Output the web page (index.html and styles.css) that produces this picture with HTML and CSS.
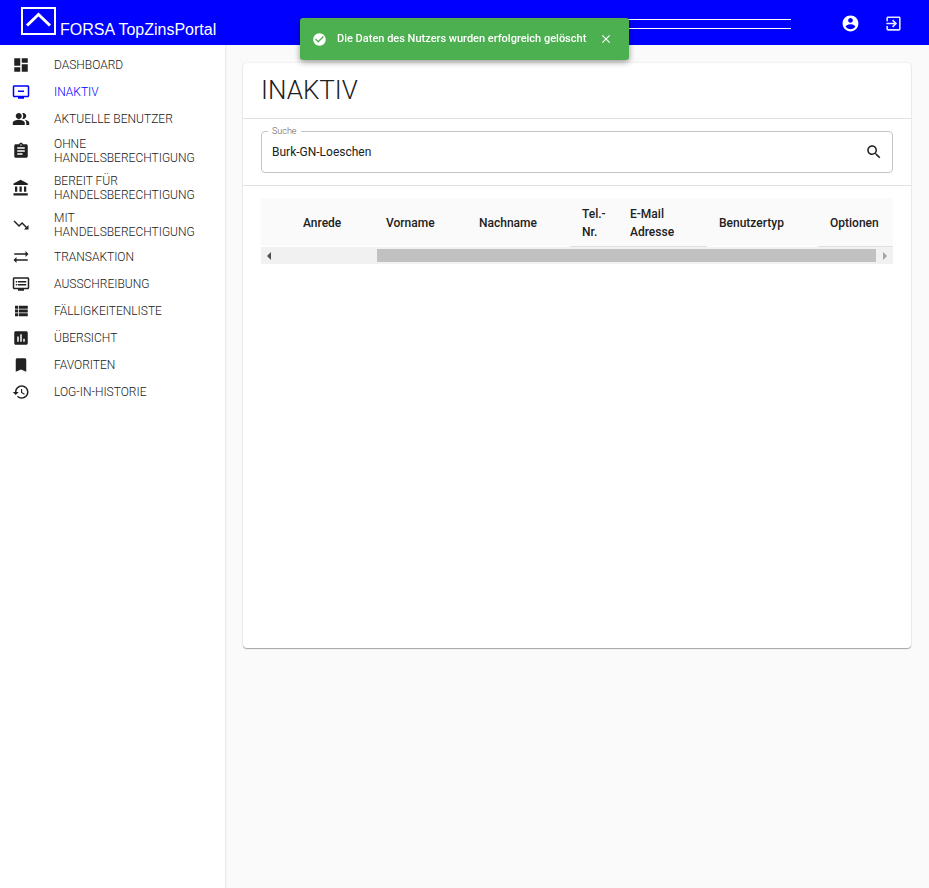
FILE: index.html
```html
<!DOCTYPE html>
<html lang="de">
<head>
<meta charset="utf-8">
<meta name="viewport" content="width=device-width, initial-scale=1">
<title>FORSA TopZinsPortal</title>
<link rel="stylesheet" href="styles.css">
</head>
<body>
<header class="topbar">
  <a class="brand" href="#">
    <svg class="brand-mark" viewBox="0 0 35 28" aria-hidden="true"><rect x="1" y="1" width="33" height="26"/><path d="M6 18.500 17.500 7.500 29 18.500"/></svg>
    <span>FORSA TopZinsPortal</span>
  </a>
  <div class="topbar-lines"></div>
  <div class="actions">
    <button type="button" aria-label="Konto"><svg class="icon" viewBox="0 0 24 24"><path d="M12 2C6.480 2 2 6.480 2 12s4.480 10 10 10 10-4.480 10-10S17.520 2 12 2zm0 3c1.660 0 3 1.340 3 3s-1.340 3-3 3-3-1.340-3-3 1.340-3 3-3zm0 14.200c-2.500 0-4.710-1.280-6-3.220.030-1.990 4-3.080 6-3.080 1.990 0 5.970 1.090 6 3.080-1.290 1.940-3.500 3.220-6 3.220z"/></svg></button>
    <button type="button" class="logout" aria-label="Abmelden"><svg class="icon" viewBox="0 0 24 24"><path d="M10.090 15.590L11.500 17l5-5-5-5-1.410 1.410L12.670 11H3v2h9.670l-2.580 2.590zM19 3H5c-1.110 0-2 .9-2 2v4h2V5h14v14H5v-4H3v4c0 1.100.890 2 2 2h14c1.100 0 2-.9 2-2V5c0-1.100-.9-2-2-2z"/></svg></button>
  </div>
</header>

<div class="layout">
  <nav class="sidebar">
    <a href="#"><svg class="icon" viewBox="0 0 24 24"><path d="M3 13h8V3H3v10zm0 8h8v-6H3v6zm10 0h8V11h-8v10zm0-18v6h8V3h-8z"/></svg><span>DASHBOARD</span></a>
    <a href="#" class="active" aria-current="page"><svg class="icon" viewBox="0 0 24 24"><path d="M21 3H3c-1.100 0-2 .9-2 2v12c0 1.100.9 2 2 2h5v2h8v-2h5c1.100 0 1.990-.9 1.990-2L23 5c0-1.100-.9-2-2-2zm0 14H3V5h18v12zm-5-7v2H8v-2h8z"/></svg><span>INAKTIV</span></a>
    <a href="#"><svg class="icon" viewBox="0 0 24 24"><path d="M16.670 13.130C18.040 14.060 19 15.320 19 17v3h4v-3c0-2.180-3.570-3.470-6.330-3.870zM15 12c2.210 0 4-1.790 4-4s-1.790-4-4-4c-.47 0-.91.1-1.330.24C14.500 5.270 15 6.580 15 8s-.5 2.730-1.330 3.760c.42.14.86.24 1.330.24zM9 12c2.210 0 4-1.790 4-4s-1.790-4-4-4-4 1.790-4 4 1.790 4 4 4zm0 1c-2.670 0-8 1.340-8 4v3h16v-3c0-2.660-5.330-4-8-4z"/></svg><span>AKTUELLE BENUTZER</span></a>
    <a href="#"><svg class="icon" viewBox="0 0 24 24"><path d="M19 3h-4.180C14.400 1.840 13.300 1 12 1c-1.300 0-2.400.84-2.820 2H5c-1.100 0-2 .9-2 2v14c0 1.100.9 2 2 2h14c1.100 0 2-.9 2-2V5c0-1.100-.9-2-2-2zm-7 0c.55 0 1 .45 1 1s-.45 1-1 1-1-.45-1-1 .45-1 1-1zm2 14H7v-2h7v2zm3-4H7v-2h10v2zm0-4H7V7h10v2z"/></svg><span>OHNE HANDELSBERECHTIGUNG</span></a>
    <a href="#"><svg class="icon" viewBox="0 0 24 24"><path d="M4 10v7h3v-7H4zm6 0v7h3v-7h-3zM2 22h19v-3H2v3zm14-12v7h3v-7h-3zm-4.500-9L2 6v2h19V6l-9.500-5z"/></svg><span>BEREIT FÜR HANDELSBERECHTIGUNG</span></a>
    <a href="#"><svg class="icon" viewBox="0 0 24 24"><path d="M16 18l2.290-2.290-4.880-4.880-4 4L2 7.410 3.410 6l6 6 4-4 6.300 6.290L22 12v6z"/></svg><span>MIT HANDELSBERECHTIGUNG</span></a>
    <a href="#"><svg class="icon" viewBox="0 0 24 24"><path d="M22 8l-4-4v3H3v2h15v3l4-4zM2 16l4 4v-3h15v-2H6v-3l-4 4z"/></svg><span>TRANSAKTION</span></a>
    <a href="#"><svg class="icon" viewBox="0 0 24 24"><path d="M21 3H3c-1.100 0-2 .9-2 2v12c0 1.100.9 2 2 2h5v2h8v-2h5c1.100 0 1.990-.9 1.990-2L23 5c0-1.100-.9-2-2-2zm0 14H3V5h18v12zm-2-9H8v2h11V8zm0 4H8v2h11v-2zM7 8H5v2h2V8zm0 4H5v2h2v-2z"/></svg><span>AUSSCHREIBUNG</span></a>
    <a href="#"><svg class="icon" viewBox="0 0 24 24"><path d="M4 14h4v-4H4v4zm0 5h4v-4H4v4zM4 9h4V5H4v4zm5 5h12v-4H9v4zm0 5h12v-4H9v4zM9 5v4h12V5H9z"/></svg><span>FÄLLIGKEITENLISTE</span></a>
    <a href="#"><svg class="icon" viewBox="0 0 24 24"><path d="M19 3H5c-1.100 0-2 .9-2 2v14c0 1.100.9 2 2 2h14c1.100 0 2-.9 2-2V5c0-1.100-.9-2-2-2zM9 17H7v-7h2v7zm4 0h-2V7h2v10zm4 0h-2v-4h2v4z"/></svg><span>ÜBERSICHT</span></a>
    <a href="#"><svg class="icon" viewBox="0 0 24 24"><path d="M17 3H7c-1.100 0-1.990.9-1.990 2L5 21l7-3 7 3V5c0-1.100-.9-2-2-2z"/></svg><span>FAVORITEN</span></a>
    <a href="#"><svg class="icon" viewBox="0 0 24 24"><path d="M13 3c-4.970 0-9 4.030-9 9H1l3.890 3.890.07.14L9 12H6c0-3.870 3.130-7 7-7s7 3.130 7 7-3.130 7-7 7c-1.930 0-3.680-.79-4.940-2.060l-1.420 1.420C8.270 19.990 10.510 21 13 21c4.970 0 9-4.030 9-9s-4.030-9-9-9zm-1 5v5l4.280 2.540.72-1.210-3.500-2.080V8H12z"/></svg><span>LOG-IN-HISTORIE</span></a>
  </nav>

  <main class="content">
    <section class="card">
      <h1>INAKTIV</h1>
      <form class="search">
        <fieldset>
          <legend><label for="suche">Suche</label></legend>
          <input id="suche" type="text" value="Burk-GN-Loeschen">
          <button type="button" aria-label="Suchen"><svg class="icon" viewBox="0 0 24 24"><path d="M15.500 14h-.79l-.28-.27C15.410 12.590 16 11.110 16 9.500 16 5.910 13.090 3 9.500 3S3 5.910 3 9.500 5.910 16 9.500 16c1.610 0 3.090-.59 4.230-1.570l.27.28v.79l5 4.990L20.490 19l-4.990-5zm-6 0C7.010 14 5 11.990 5 9.500S7.010 5 9.500 5 14 7.010 14 9.500 11.990 14 9.500 14z"/></svg></button>
        </fieldset>
      </form>
      <div class="table-wrap">
        <table>
          <colgroup><col class="c-select"><col class="c-title"><col class="c-first"><col class="c-last"><col class="c-phone"><col class="c-mail"><col class="c-type"><col class="c-options"></colgroup>
          <thead>
            <tr><td></td><th>Anrede</th><th>Vorname</th><th>Nachname</th><th class="lined">Tel.-Nr.</th><th class="lined">E-Mail Adresse</th><th>Benutzertyp</th><th class="lined">Optionen</th></tr>
          </thead>
        </table>
        <div class="scrollbar" aria-hidden="true">
          <span class="arrow arrow-left"></span>
          <div class="track"><div class="thumb"></div></div>
          <span class="arrow arrow-right"></span>
        </div>
      </div>
    </section>
  </main>
</div>

<div class="toast" role="status">
  <svg class="toast-check" viewBox="0 0 24 24" aria-hidden="true"><path d="M12 2C6.500 2 2 6.500 2 12s4.500 10 10 10 10-4.500 10-10S17.500 2 12 2zm-2 15l-5-5 1.410-1.410L10 14.170l7.590-7.590L19 8l-9 9z"/></svg>
  <p>Die Daten des Nutzers wurden erfolgreich gelöscht</p>
  <button type="button" aria-label="Schließen"><svg viewBox="0 0 24 24"><path d="M19 6.410L17.590 5 12 10.590 6.410 5 5 6.410 10.590 12 5 17.590 6.410 19 12 13.410 17.590 19 19 17.590 13.410 12z"/></svg></button>
</div>
</body>
</html>
```
FILE: styles.css
```css
* {
  box-sizing: border-box;
}

body {
  margin: 0;
  min-height: 100vh;
  display: flex;
  flex-direction: column;
  background: #fafafa;
  color: #212121;
  font: 400 12px/18px Roboto, sans-serif;
}

button {
  display: flex;
  padding: 0;
  border: 0;
  background: none;
  color: inherit;
  cursor: pointer;
}

svg {
  display: block;
  flex: none;
  fill: currentColor;
}

.icon {
  width: 18px;
  height: 18px;
}

.topbar {
  display: flex;
  align-items: center;
  height: 45px;
  padding: 0 26px 0 21px;
  background: #0000ff;
  color: #fff;
}

.brand {
  display: flex;
  align-items: flex-end;
  gap: 4px;
  padding-bottom: 2px;
  color: inherit;
  font: 16px/14px "Liberation Sans", sans-serif;
  text-decoration: none;
}

.brand-mark {
  width: 35px;
  height: 28px;
  margin-bottom: 2px;
  fill: none;
  stroke: #fff;
  stroke-width: 2;
}

.brand-mark path {
  stroke-width: 3;
}

.topbar-lines {
  flex: 1;
  height: 10px;
  margin: 2px 50px 0 200px;
  border: solid #fff;
  border-width: 1px 0;
}

.actions {
  display: flex;
  gap: 24px;
  padding-top: 1px;
}

.actions .icon {
  width: 19px;
  height: 19px;
}

.logout {
  opacity: 0.9;
}

.layout {
  flex: 1;
  display: grid;
  grid-template-columns: 225px 1fr;
}

.sidebar {
  padding: 7px 12px;
  background: #fff;
  box-shadow: 0 0 2px rgba(0, 0, 0, 0.2);
  clip-path: inset(0 -4px 0 0);
}

.sidebar a {
  display: flex;
  align-items: center;
  gap: 24px;
  padding: 4px 0 5px;
  color: inherit;
  font-weight: 300;
  line-height: 14px;
  text-decoration: none;
}

.sidebar .active {
  color: #0000ff;
}

.content {
  padding: 18px;
}

.card {
  min-height: calc(100vh - 303px);
  border-radius: 4px;
  background: #fff;
  box-shadow: 0 1px 1px rgba(0, 0, 0, 0.32), 0 0 2px rgba(0, 0, 0, 0.12);
}

h1 {
  margin: 0;
  padding: 11px 18px 12px;
  border-bottom: 1px solid #e0e0e0;
  font-size: 26px;
  font-weight: 300;
  line-height: 32px;
}

.search {
  padding: 8px 18px 12px;
  border-bottom: 1px solid #e0e0e0;
}

fieldset {
  display: flex;
  align-items: center;
  min-width: 0;
  margin: 0;
  padding: 0 9px 4px 6px;
  border: 1px solid #c4c4c4;
  border-radius: 4px;
}

legend {
  height: 9px;
  padding: 0 4px;
  color: #616161;
  font-size: 9px;
  font-weight: 300;
  line-height: 9px;
}

.search input {
  flex: 1;
  min-width: 0;
  height: 32px;
  padding: 0 4px;
  border: 0;
  outline: 0;
  background: none;
  color: inherit;
  font: inherit;
}

.table-wrap {
  padding: 12px 18px;
}

table {
  width: 100%;
  table-layout: fixed;
  border-collapse: separate;
  border-spacing: 0;
}

th,
td {
  height: 49px;
  padding: 7px 12px 5px;
  border-bottom: 1px solid #fff;
  background: #fafafa;
  background-clip: padding-box;
  font-weight: 500;
  text-align: left;
}

.lined {
  border-bottom-color: #e0e0e0;
}

.c-select { width: 30px; }
.c-title { width: 83px; }
.c-first { width: 93px; }
.c-last { width: 103px; }
.c-phone { width: 48px; }
.c-mail { width: 89px; }
.c-type { width: 111px; }
.c-options { width: 75px; }

.scrollbar {
  display: flex;
  align-items: center;
  height: 17px;
  background: #f1f1f1;
}

.arrow {
  width: 10px;
  border: solid transparent;
  border-width: 4px 0 4px 6px;
}

.arrow-left {
  margin-right: 7px;
  border-right: 4px solid #505050;
}

.arrow-right {
  margin-left: 7px;
  border-right: 6px solid transparent;
  border-left: 4px solid #a3a3a3;
}

.track {
  flex: 1;
}

.thumb {
  width: 499px;
  max-width: 84%;
  height: 13px;
  margin-left: auto;
  background: #c1c1c1;
}

.toast {
  position: fixed;
  top: 18px;
  right: 0;
  left: 0;
  display: flex;
  align-items: center;
  width: 329px;
  height: 42px;
  margin: 0 auto;
  padding: 0 16px 0 12px;
  border-radius: 3px;
  background: #4caf50;
  box-shadow: 0 2px 6px rgba(0, 0, 0, 0.4);
  color: #fff;
  font-size: 11px;
  font-weight: 500;
}

.toast-check {
  width: 15px;
  height: 15px;
  margin-right: 10px;
}

.toast p {
  flex: 1;
  margin: 0;
  white-space: nowrap;
}

.toast button svg {
  width: 14px;
  height: 14px;
}
```
